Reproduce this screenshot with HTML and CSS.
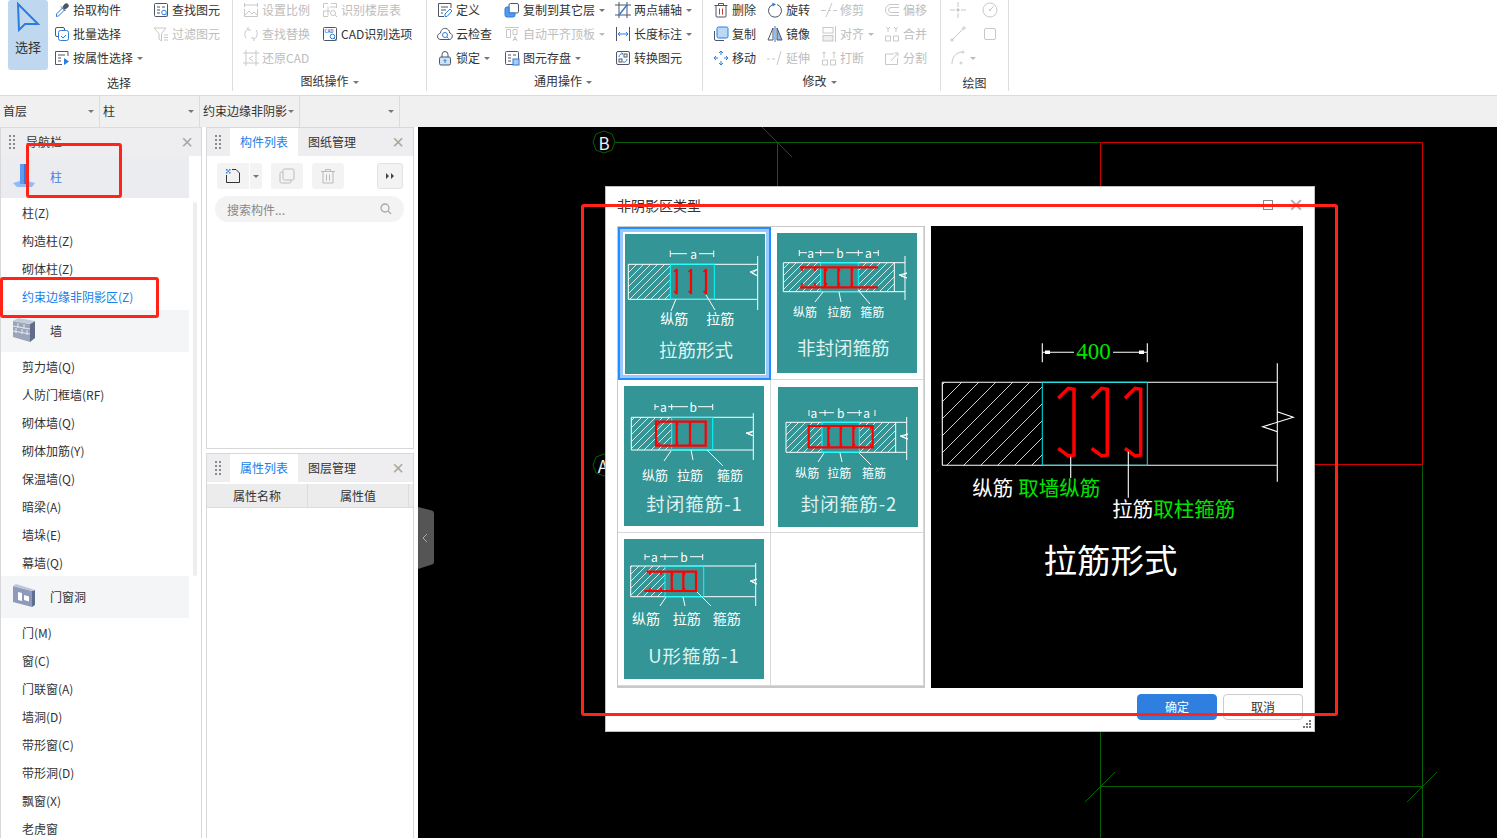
FILE: index.html
```html
<!DOCTYPE html>
<html lang="zh-CN">
<head>
    <meta charset="UTF-8">
    <title>非阴影区类型</title>
    <link rel="stylesheet" href="styles.css">
</head>
<body>

    <!-- Icon sprite -->
    <svg class="sprite" xmlns="http://www.w3.org/2000/svg">
        <defs>
            <pattern id="hatch" width="7" height="7" patternUnits="userSpaceOnUse"><path d="M-1 8L8 -1M-1 1L1 -1M6 8L8 6" stroke="#fff" stroke-width="0.8"/></pattern>
            <pattern id="hatch-big" width="17" height="17" patternUnits="userSpaceOnUse"><path d="M-1 18L18 -1M-1 1L1 -1M16 18L18 16" stroke="#fff" stroke-width="0.8"/></pattern>
        </defs>
        <symbol id="i-pick" viewBox="0 0 16 16"><path d="M2.5 14.5v-2.5l6-6 2 2-6 6z" stroke="#2b7de0"/><path d="M7 4.500l4.500 4.500M9 5l1.500-2.500c1-1 3-1 3.500 0s.5 2-.5 3L11 7z" fill="#4d5666"/></symbol>
        <symbol id="i-batch" viewBox="0 0 16 16"><rect x="1.500" y="1.500" width="9" height="9" rx="1.500"/><rect x="4.500" y="4.500" width="10" height="10" rx="2" stroke="#2b7de0" fill="#fff"/><path d="M7 10l2 2 3-3" stroke="#2b7de0"/></symbol>
        <symbol id="i-attr" viewBox="0 0 16 16"><path d="M14 6V1.500H1.500v13H8"/><path d="M4 5h7M4 8h3M4 11h3"/><path d="M10 8l5 3.500-5 3.500z" fill="#2b7de0" stroke="none"/></symbol>
        <symbol id="i-find" viewBox="0 0 16 16"><rect x="1.500" y="1.500" width="13" height="13" rx="1"/><path d="M4 5h3M9 5h3M4 8h3M4 11h3"/><circle cx="11" cy="10.500" r="2.300" stroke="#2b7de0" fill="#fff"/><path d="M12.700 12.200l2 2" stroke="#2b7de0"/></symbol>
        <symbol id="i-filter" viewBox="0 0 16 16"><path d="M1 2h12L8.500 7.500V15L6 13V7.500z"/><path d="M11 9h4M11 11.500h4M11 14h4"/></symbol>
        <symbol id="i-scale" viewBox="0 0 16 16"><path d="M1.500 3h13M1.500 1v4M14.500 1v4"/><path d="M1.500 7v7.500h13V7"/><path d="M2 13l4-4 3 3 2-2 3 3"/></symbol>
        <symbol id="i-floor" viewBox="0 0 16 16"><path d="M1.500 6V1.500H6M9 1.500h5.500V6M1.500 9v5.500H6M6 4.500v9M1.500 9H8M8 5h6"/><circle cx="11" cy="11" r="2.500"/><path d="M13 13l2 2"/></symbol>
        <symbol id="i-replace" viewBox="0 0 16 16"><path d="M3 12c-2-3-1.500-7 2-9M13 4c2 3 1.500 7-2 9"/><path d="M5 1v3h3M11 15v-3H8"/></symbol>
        <symbol id="i-restore" viewBox="0 0 16 16"><path d="M3 0v16M13 0v16M0 3h16M0 13h16"/><path d="M10 6L6 8.500l4 2.500" /></symbol>
        <symbol id="i-define" viewBox="0 0 16 16"><path d="M14 6V1.500H1.500v13H7"/><path d="M4 5h7M4 8h5M4 11h2"/><path d="M8 14.500V12l5-5 2 2-5 5.500z" stroke="#2b7de0"/></symbol>
        <symbol id="i-cloud" viewBox="0 0 16 16"><path d="M4 13.500C1 13.500 0 11.500.700 9.500S3 7.500 3.500 7C4 3 7 2 9 2.500s3.500 2 3.700 4.500c2 .5 3 2 2.500 4s-2 2.500-3.200 2.500z"/><circle cx="8" cy="9" r="2.500" stroke="#2b7de0"/><path d="M10 11l1.500 1.500" stroke="#2b7de0"/></symbol>
        <symbol id="i-lock" viewBox="0 0 16 16"><path d="M5 7V4.500a3 3 0 0 1 6 0V7"/><rect x="2.500" y="7" width="11" height="8" rx="1.500" fill="#cfe2fa"/><path d="M8 13v-3M6.500 11L8 9.500 9.500 11" stroke="#2b7de0"/></symbol>
        <symbol id="i-copyto" viewBox="0 0 16 16"><rect x="5" y="1.500" width="9.500" height="9.500" rx="1.500"/><path d="M1 7a2 2 0 0 1 2-2h2v6h6v2a2 2 0 0 1-2 2H3a2 2 0 0 1-2-2z" fill="#4e9bf0" stroke="#2b7de0"/></symbol>
        <symbol id="i-autoalign" viewBox="0 0 16 16"><path d="M1 1.500h14M2.500 3.500h4v8h-4zM9 3.500h4v5H9z"/><path d="M9 15l2-4.500 2 4.500M9.800 13.500h2.400"/></symbol>
        <symbol id="i-save" viewBox="0 0 16 16"><rect x="1.500" y="1.500" width="13" height="13" rx="1"/><path d="M4 5h3M9 5h3M4 8h3M4 11h3"/><rect x="9" y="9" width="6" height="6" fill="#a9cdf5" stroke="#2b7de0"/></symbol>
        <symbol id="i-axis" viewBox="0 0 16 16"><path d="M4 0v16M12 0v16M0 3h16M0 13h16"/><path d="M4 13L12 3" stroke="#2b7de0" stroke-width="1.500"/></symbol>
        <symbol id="i-dim" viewBox="0 0 16 16"><path d="M1.500 1v14M14.500 1v14"/><path d="M3 8h10M5 6L3 8l2 2M11 6l2 2-2 2" stroke="#2b7de0"/></symbol>
        <symbol id="i-convert" viewBox="0 0 16 16"><rect x="1.500" y="1.500" width="13" height="13" rx="1.500"/><path d="M4 7a3 3 0 0 1 4-3M8 4L6.500 2.500M12 9a3 3 0 0 1-4 3" stroke="#2b7de0"/><rect x="9" y="4" width="3" height="3"/><rect x="4" y="9" width="3" height="3"/></symbol>
        <symbol id="i-del" viewBox="0 0 16 16"><path d="M1.500 3.500h13M5.500 3.500V1.500h5v2"/><rect x="3" y="3.500" width="10" height="11.500" rx="1"/><path d="M6.500 6.500v6M9.500 6.500v6" stroke="#c83232"/></symbol>
        <symbol id="i-rotate" viewBox="0 0 16 16"><path d="M10 2.500a6.500 6.500 0 1 1-4 0"/><path d="M5.500.5l3.500 2-3.500 2z" fill="#2b7de0" stroke="none"/></symbol>
        <symbol id="i-trim" viewBox="0 0 16 16"><path d="M0 8.500h5M7 8.500h3M12 8.500h4" /><path d="M11 1L5 15"/></symbol>
        <symbol id="i-offset" viewBox="0 0 16 16"><path d="M15 2.500H7a5.500 5.500 0 0 0 0 11h8"/><path d="M15 5.500H7a2.500 2.500 0 0 0 0 5h8"/></symbol>
        <symbol id="i-copy" viewBox="0 0 16 16"><path d="M1.500 5v8a1.500 1.500 0 0 0 1.500 1.500h8"/><rect x="4" y="1" width="11" height="11" rx="1.500" fill="#bcd8f7" stroke="#2b7de0"/></symbol>
        <symbol id="i-mirror" viewBox="0 0 16 16"><path d="M6 2L1 14h5z" fill="#fff"/><path d="M10 2l5 12h-5z" fill="#8cb8ea" stroke="#4d5666"/><path d="M8 0v16" stroke="#2b7de0"/></symbol>
        <symbol id="i-align" viewBox="0 0 16 16"><rect x="2" y="1.500" width="10" height="5.500"/><rect x="2" y="9.500" width="10" height="5.500" fill="#eee"/><path d="M14.500 0v16"/></symbol>
        <symbol id="i-merge" viewBox="0 0 16 16"><path d="M1.500 10v5h5v-5zM9.500 10v5h5v-5z"/><path d="M4 2v4M12 2v4M2 1l2 2 2-2M10 1l2 2 2-2"/></symbol>
        <symbol id="i-move" viewBox="0 0 16 16"><g stroke="#2b7de0"><path d="M8 5V1M8 15v-4M5 8H1M15 8h-4"/><path d="M6 3l2-2 2 2M6 13l2 2 2-2M3 6L1 8l2 2M13 6l2 2-2 2"/></g></symbol>
        <symbol id="i-extend" viewBox="0 0 16 16"><path d="M0 9h3M5 9h3M14 1l-4 14"/></symbol>
        <symbol id="i-break" viewBox="0 0 16 16"><path d="M1.500 10v5h5v-5zM9.500 10v5h5v-5z"/><circle cx="3" cy="3" r="1"/><circle cx="13" cy="3" r="1"/><path d="M3 5v3M13 5v3"/></symbol>
        <symbol id="i-split" viewBox="0 0 16 16"><path d="M10 4H1.500v10.500h12V8"/><path d="M7 11l7-8"/><path d="M10.500 3H14v3.500"/></symbol>
        <symbol id="i-point" viewBox="0 0 16 16"><path d="M8 0v5M8 11v5M0 8h5M11 8h5"/><circle cx="8" cy="8" r="1.200" fill="#c8c8c8"/></symbol>
        <symbol id="i-circle" viewBox="0 0 16 16"><circle cx="8" cy="8" r="7"/><path d="M8 8l4-4"/><circle cx="8" cy="8" r=".8"/></symbol>
        <symbol id="i-line" viewBox="0 0 16 16"><path d="M2.500 13.500l11-11"/><circle cx="2" cy="14" r="1.200"/><circle cx="14" cy="2" r="1.200"/></symbol>
        <symbol id="i-rect" viewBox="0 0 16 16"><rect x="2.500" y="2.500" width="11" height="11" rx="1.500"/></symbol>
        <symbol id="i-arc" viewBox="0 0 16 16"><path d="M2 14C2 7 6 2.500 12 2"/><circle cx="13" cy="2" r="1"/><circle cx="11" cy="13" r="1"/></symbol>
    </svg>

    <!-- Ribbon -->
    <header class="ribbon">
        <section class="group group-select">
            <div class="group-body">
                <div class="big-btn">
                    <svg class="big-arrow" viewBox="0 0 26 32"><path d="M3 3L23 23H10L4 29z"/></svg>
                    <span>选择</span>
                </div>
                <div class="col w-99">
                    <div class="row"><svg class="ic"><use href="#i-pick"/></svg>拾取构件</div>
                    <div class="row"><svg class="ic"><use href="#i-batch"/></svg>批量选择</div>
                    <div class="row"><svg class="ic"><use href="#i-attr"/></svg>按属性选择<i class="caret"></i></div>
                </div>
                <div class="col">
                    <div class="row"><svg class="ic"><use href="#i-find"/></svg>查找图元</div>
                    <div class="row off"><svg class="ic"><use href="#i-filter"/></svg>过滤图元</div>
                </div>
            </div>
            <div class="group-label label-select">选择</div>
        </section>

        <section class="group group-drawing">
            <div class="group-body">
                <div class="col w-79">
                    <div class="row off"><svg class="ic"><use href="#i-scale"/></svg>设置比例</div>
                    <div class="row off"><svg class="ic"><use href="#i-replace"/></svg>查找替换</div>
                    <div class="row off"><svg class="ic"><use href="#i-restore"/></svg>还原CAD</div>
                </div>
                <div class="col">
                    <div class="row off"><svg class="ic"><use href="#i-floor"/></svg>识别楼层表</div>
                    <div class="row">
                        <svg class="ic" viewBox="0 0 16 16"><rect x="1.500" y="1.500" width="13" height="13" rx="1"/><text x="2.500" y="7" class="ic-cad">CAD</text><circle cx="10.500" cy="10.500" r="2.300" stroke="#2b7de0" fill="#fff"/><path d="M12.200 12.200l2 2" stroke="#2b7de0"/></svg>CAD识别选项
                    </div>
                </div>
            </div>
            <div class="group-label">图纸操作<i class="caret"></i></div>
        </section>

        <section class="group group-common">
            <div class="group-body">
                <div class="col w-67">
                    <div class="row"><svg class="ic"><use href="#i-define"/></svg>定义</div>
                    <div class="row"><svg class="ic"><use href="#i-cloud"/></svg>云检查</div>
                    <div class="row"><svg class="ic"><use href="#i-lock"/></svg>锁定<i class="caret"></i></div>
                </div>
                <div class="col w-111">
                    <div class="row"><svg class="ic"><use href="#i-copyto"/></svg>复制到其它层<i class="caret"></i></div>
                    <div class="row off"><svg class="ic"><use href="#i-autoalign"/></svg>自动平齐顶板<i class="caret"></i></div>
                    <div class="row"><svg class="ic"><use href="#i-save"/></svg>图元存盘<i class="caret"></i></div>
                </div>
                <div class="col">
                    <div class="row"><svg class="ic"><use href="#i-axis"/></svg>两点辅轴<i class="caret"></i></div>
                    <div class="row"><svg class="ic"><use href="#i-dim"/></svg>长度标注<i class="caret"></i></div>
                    <div class="row"><svg class="ic"><use href="#i-convert"/></svg>转换图元</div>
                </div>
            </div>
            <div class="group-label">通用操作<i class="caret"></i></div>
        </section>

        <section class="group group-modify">
            <div class="group-body">
                <div class="col w-54">
                    <div class="row"><svg class="ic"><use href="#i-del"/></svg>删除</div>
                    <div class="row"><svg class="ic"><use href="#i-copy"/></svg>复制</div>
                    <div class="row"><svg class="ic"><use href="#i-move"/></svg>移动</div>
                </div>
                <div class="col w-54">
                    <div class="row"><svg class="ic"><use href="#i-rotate"/></svg>旋转</div>
                    <div class="row"><svg class="ic"><use href="#i-mirror"/></svg>镜像</div>
                    <div class="row off"><svg class="ic"><use href="#i-extend"/></svg>延伸</div>
                </div>
                <div class="col w-63">
                    <div class="row off"><svg class="ic"><use href="#i-trim"/></svg>修剪</div>
                    <div class="row off"><svg class="ic"><use href="#i-align"/></svg>对齐<i class="caret"></i></div>
                    <div class="row off"><svg class="ic"><use href="#i-break"/></svg>打断</div>
                </div>
                <div class="col">
                    <div class="row off"><svg class="ic"><use href="#i-offset"/></svg>偏移</div>
                    <div class="row off"><svg class="ic"><use href="#i-merge"/></svg>合并</div>
                    <div class="row off"><svg class="ic"><use href="#i-split"/></svg>分割</div>
                </div>
            </div>
            <div class="group-label">修改<i class="caret"></i></div>
        </section>

        <section class="group group-draw">
            <div class="group-body">
                <div class="col w-32">
                    <div class="row off"><svg class="ic"><use href="#i-point"/></svg></div>
                    <div class="row off"><svg class="ic"><use href="#i-line"/></svg></div>
                    <div class="row off"><svg class="ic"><use href="#i-arc"/></svg><i class="caret"></i></div>
                </div>
                <div class="col">
                    <div class="row off"><svg class="ic"><use href="#i-circle"/></svg></div>
                    <div class="row off"><svg class="ic"><use href="#i-rect"/></svg></div>
                </div>
            </div>
            <div class="group-label label-draw">绘图</div>
        </section>
    </header>

    <!-- Floor / type selectors -->
    <div class="selectors">
        <div class="selector">首层<i class="caret"></i></div>
        <div class="selector">柱<i class="caret"></i></div>
        <div class="selector">约束边缘非阴影<i class="caret"></i></div>
        <div class="selector"><i class="caret"></i></div>
    </div>

    <main class="workspace">
        <!-- Navigation -->
        <aside class="nav">
            <div class="panel-head">
                <span class="grip"></span>
                <span class="nav-title">导航栏</span>
                <span class="close">×</span>
            </div>
            <div class="nav-scroll">
                <div class="nav-head nav-head-active">
                    <svg class="nav-icon" viewBox="0 0 24 26"><path d="M8 1h7v20H8z" fill="#5c9cf0"/><path d="M12 1h3v20h-3z" fill="#3a78d8"/><path d="M1 20l7-2v3h7v-3l8 2-3 4H5z" fill="#8dbcf7"/></svg>
                    <span>柱</span>
                </div>
                <div class="nav-item">柱(Z)</div>
                <div class="nav-item">构造柱(Z)</div>
                <div class="nav-item">砌体柱(Z)</div>
                <div class="nav-item active">约束边缘非阴影区(Z)</div>
                <div class="nav-head">
                    <svg class="nav-icon" viewBox="0 0 24 26"><path d="M1 4l17 3v18L1 20z" fill="#9aa5ba"/><path d="M18 7l5-3v17l-5 4z" fill="#5f6d88"/><path d="M1 4l5-3 17 3-5 3z" fill="#c3cad8"/><path d="M1 9l17 3M1 14l17 3M6 6v5M12 7v5M4 11v5M10 12v5M15 13v5" stroke="#e4e8ef" fill="none"/></svg>
                    <span>墙</span>
                </div>
                <div class="nav-item">剪力墙(Q)</div>
                <div class="nav-item">人防门框墙(RF)</div>
                <div class="nav-item">砌体墙(Q)</div>
                <div class="nav-item">砌体加筋(Y)</div>
                <div class="nav-item">保温墙(Q)</div>
                <div class="nav-item">暗梁(A)</div>
                <div class="nav-item">墙垛(E)</div>
                <div class="nav-item">幕墙(Q)</div>
                <div class="nav-head">
                    <svg class="nav-icon" viewBox="0 0 24 26"><path d="M1 3l19 5v16L1 19z" fill="#8d9abb"/><path d="M6 9l4 1v8l-4-1zM12 12l5 1.500v5l-5-1.500z" fill="#fff"/><path d="M20 8l3-1v15l-3 2z" fill="#5f6d90"/><path d="M1 3l3-2 19 6-3 1z" fill="#bcc5da"/></svg>
                    <span>门窗洞</span>
                </div>
                <div class="nav-item">门(M)</div>
                <div class="nav-item">窗(C)</div>
                <div class="nav-item">门联窗(A)</div>
                <div class="nav-item">墙洞(D)</div>
                <div class="nav-item">带形窗(C)</div>
                <div class="nav-item">带形洞(D)</div>
                <div class="nav-item">飘窗(X)</div>
                <div class="nav-item">老虎窗</div>
                <div class="scrollbar"></div>
            </div>
        </aside>

        <!-- Component list and properties -->
        <div class="middle">
            <section class="panel panel-list">
                <div class="panel-head">
                    <span class="grip"></span>
                    <span class="tab tab-active">构件列表</span>
                    <span class="tab">图纸管理</span>
                    <span class="close">×</span>
                </div>
                <div class="list-tools">
                    <div class="tool tool-new">
                        <svg class="tool-ic" viewBox="0 0 16 16"><path d="M7 1.500h4l3.500 3.500v9.500H1.500V7" fill="none" stroke="#333"/><path d="M1 1h1.500v1.500H1zM4 1h1.500v1.500H4zM2.500 2.500H4V4H2.500zM1 4h1.500v1.500H1zM4 4h1.500v1.500H4z" fill="#2b7de0"/></svg>
                        <span class="tool-caret"><i class="caret"></i></span>
                    </div>
                    <div class="tool">
                        <svg class="tool-ic" viewBox="0 0 16 16"><rect x="1" y="4" width="11" height="11" rx="1.500" fill="none" stroke="#bbb"/><rect x="4" y="1" width="11" height="11" rx="1.500" fill="#f3f3f3" stroke="#bbb"/></svg>
                    </div>
                    <div class="tool">
                        <svg class="tool-ic" viewBox="0 0 16 16"><path d="M1 3.500h14M5.500 3.500v-2h5v2M3 3.500V15h10V3.500M6.500 6.500v6M9.500 6.500v6" fill="none" stroke="#bbb"/></svg>
                    </div>
                    <div class="tool tool-more">
                        <svg class="more-ic" viewBox="0 0 8 6"><path d="M0 0l3 3-3 3zM5 0l3 3-3 3z" fill="#444"/></svg>
                    </div>
                </div>
                <div class="search">
                    <span>搜索构件...</span>
                    <svg class="search-ic" viewBox="0 0 12 12"><circle cx="5" cy="5" r="4" fill="none" stroke="#aaa" stroke-width="1.300"/><path d="M8 8l3 3" stroke="#aaa" stroke-width="1.300"/></svg>
                </div>
            </section>
            <section class="panel panel-props">
                <div class="panel-head">
                    <span class="grip"></span>
                    <span class="tab tab-active">属性列表</span>
                    <span class="tab">图层管理</span>
                    <span class="close">×</span>
                </div>
                <div class="props-head">
                    <span class="props-name">属性名称</span>
                    <span class="props-value">属性值</span>
                    <span class="props-end"></span>
                </div>
            </section>
        </div>

        <!-- CAD canvas -->
        <div class="canvas">
            <svg class="cad" viewBox="418 127 1079 711">
                <g class="cad-green">
                    <path d="M615 142.500H1100M777.500 142.500V186M762 127l30 30"/>
                    <path d="M1100.500 732V838M1422.500 465V838M1100 786.500H1422M1085 802l30-30M1407 802l30-30"/>
                    <polygon points="604,131 612,134 615,142 612,150 604,153 596,150 593,142 596,134"/>
                    <polygon points="604,454 612,457 615,465 612,473 604,476 596,473 593,465 596,457"/>
                </g>
                <text class="cad-letter" x="604" y="142">B</text>
                <text class="cad-letter" x="603" y="465">A</text>
                <path class="cad-red" d="M1100.500 186V142.500H1422.500V464.500H1315"/>
                <path class="split-tab" d="M418 507l14 3.500q2 .5 2 3v48q0 2.500-2 3l-14 4.500z"/>
                <path class="split-arrow" d="M427 534l-4 4 4 4"/>
            </svg>
        </div>
    </main>

    <!-- Dialog -->
    <div class="dialog">
        <div class="dialog-head">
            <span>非阴影区类型</span>
            <span class="dialog-max"></span>
            <span class="dialog-close">×</span>
        </div>
        <div class="dialog-body">
            <div class="types">
                <div class="type type-selected">
                    <svg class="thumb" viewBox="0 0 140 140">
                        <rect class="t-hatch" x="3.300" y="30.300" width="42" height="35"/>
                        <path class="t-white" d="M3.300 30.300H132.700M3.300 65.300H132.700M3.300 30.300V65.300M132.700 22V76M125 38l8-3-6 4 6 3z"/>
                        <rect class="t-cyan" x="45.300" y="30.300" width="44" height="35"/>
                        <path class="t-red" d="M51.700 35v25M66 35v25M81 35v25"/>
                        <path class="t-barb" d="M49 38l3-3M49 57l3 3M63.500 38l3-3M63.500 57l3 3M78.500 38l3-3M78.500 57l3 3"/>
                        <path class="t-white" d="M45.300 16.500v6.500M88.700 16.500v6.500M45.300 19.700H62M74 19.700H88.700M51 65l-5 12M81 61l9 15"/>
                        <text class="t-dim" x="68.700" y="19">a</text>
                        <text class="t-label t-14" x="49.300" y="84">纵筋</text>
                        <text class="t-label t-14" x="95.300" y="84">拉筋</text>
                        <text class="t-title" x="71" y="115">拉筋形式</text>
                    </svg>
                </div>
                <div class="type">
                    <svg class="thumb" viewBox="0 0 140 140">
                        <rect class="t-hatch" x="6.300" y="29.700" width="37.400" height="29"/>
                        <rect class="t-hatch" x="81.300" y="29.700" width="36" height="29"/>
                        <path class="t-white" d="M6.300 29.700H128M6.300 58.700H128M6.300 29.700V58.700M117.300 29.700V58.700M128 23V67M122 42l8-2-6 3 6 2z"/>
                        <rect class="t-cyan" x="43.700" y="29.700" width="37.600" height="29"/>
                        <path class="t-red" d="M23 34.300H101M23 54.300H101M48 34.300V54.300M61.300 34.300V54.300M74.700 34.300V54.300"/>
                        <path class="t-barb" d="M25 38v-3M38 38v-3M25 50v3M38 50v3M50 38l-2-3M63 38l-2-3M76 38l-2-3M50 50l-2 3M63 50l-2 3M76 50l-2 3"/>
                        <path class="t-white" d="M22.300 17v6M43.700 17v6M81.300 17v6M101.300 17v6M22.300 19.700H30M38 19.700H57M69 19.700H86M96 19.700H101M46 59l-8 10M62 59l2 10M81 57l12 14"/>
                        <text class="t-dim" x="33.700" y="19">a</text>
                        <text class="t-dim" x="63" y="19">b</text>
                        <text class="t-dim" x="91.300" y="19">a</text>
                        <text class="t-label t-12" x="28" y="78.700">纵筋</text>
                        <text class="t-label t-12" x="62.300" y="78.700">拉筋</text>
                        <text class="t-label t-12" x="95.300" y="78.700">箍筋</text>
                        <text class="t-title" x="66.300" y="114">非封闭箍筋</text>
                    </svg>
                </div>
                <div class="type">
                    <svg class="thumb" viewBox="0 0 140 140">
                        <rect class="t-hatch" x="7.300" y="31.300" width="40.400" height="32.700"/>
                        <path class="t-white" d="M7.300 31.300H129.300M7.300 64H129.300M7.300 31.300V64M129.300 27V74M122 47l8-2-6 3 6 2z"/>
                        <rect class="t-cyan" x="47.700" y="31.300" width="41" height="32.700"/>
                        <path class="t-red" d="M32 35.700H81.700V59.700H32zM52.700 35.700V59.700M66 35.700V59.700"/>
                        <path class="t-barb" d="M33 56l3 3M33 39l3-3M54 39l-2-3M54 56l-2 3M67 39l-2-3M67 56l-2 3"/>
                        <path class="t-white" d="M31 18v6M47.700 18v6M88.700 18v6M31 20.700H35M44 20.700H64M74 20.700H88.700M47 65l-7 10M67 64l2 10M83 64l16 16"/>
                        <text class="t-dim" x="39.300" y="20">a</text>
                        <text class="t-dim" x="69.300" y="20">b</text>
                        <text class="t-label t-13" x="31" y="88">纵筋</text>
                        <text class="t-label t-13" x="66" y="88">拉筋</text>
                        <text class="t-label t-13" x="106" y="88">箍筋</text>
                        <text class="t-title t-wide" x="70.500" y="116.700">封闭箍筋-1</text>
                    </svg>
                </div>
                <div class="type">
                    <svg class="thumb thumb-low" viewBox="0 0 140 140">
                        <rect class="t-hatch" x="8" y="35.300" width="36" height="30"/>
                        <rect class="t-hatch" x="81.300" y="35.300" width="36.400" height="30"/>
                        <path class="t-white" d="M8 35.300H128.700M8 65.300H128.700M8 35.300V65.300M117.700 35.300V65.300M128.700 30V73M122 49l8-2-6 3 6 2z"/>
                        <rect class="t-cyan" x="44" y="35.300" width="37.300" height="30"/>
                        <path class="t-red" d="M30.700 39H94.700V60.300H30.700zM50.300 39V60.300M62.700 39V60.300M75.300 39V60.300"/>
                        <path class="t-barb" d="M52 42l-2-3M64 42l-2-3M77 42l-2-3M52 57l-2 3M64 57l-2 3M77 57l-2 3M92 42l2-3M92 57l2 3"/>
                        <path class="t-white" d="M31 23v6M47 23v6M81.300 23v6M97 23v6M41 25.700H56M69 25.700H84M46 66l-6 9M62 66l2 9M81 66l12 12"/>
                        <text class="t-dim" x="36" y="25">a</text>
                        <text class="t-dim" x="62.700" y="25">b</text>
                        <text class="t-dim" x="88.700" y="25">a</text>
                        <text class="t-label t-12" x="29.300" y="85.700">纵筋</text>
                        <text class="t-label t-12" x="61.300" y="85.700">拉筋</text>
                        <text class="t-label t-12" x="96" y="85.700">箍筋</text>
                        <text class="t-title t-wide" x="71" y="115.700">封闭箍筋-2</text>
                    </svg>
                </div>
                <div class="type">
                    <svg class="thumb" viewBox="0 0 140 140">
                        <rect class="t-hatch" x="6.700" y="27" width="34.300" height="30.700"/>
                        <path class="t-white" d="M6.700 27H131.700M6.700 57.700H131.700M6.700 27V57.700M131.700 24V67M126 42l7-2-5 3 5 2z"/>
                        <rect class="t-cyan" x="41" y="27" width="38.700" height="30.700"/>
                        <path class="t-red" d="M22.700 32.700H72V52H20.300M47.700 32.700V52M59.300 32.700V52"/>
                        <path class="t-barb" d="M26 36v-3M37 36v-3M26 49v3M37 49v3M49 36l-2-3M61 36l-2-3M49 49l-2 3M61 49l-2 3"/>
                        <path class="t-white" d="M21 15v6M41 15v6M78.700 15v6M21 17.700H26M36 17.700H54M66 17.700H78.700M42 58l-6 9M59 58l2 9M73 53l14 14"/>
                        <text class="t-dim" x="30.300" y="17">a</text>
                        <text class="t-dim" x="60" y="17">b</text>
                        <text class="t-label t-14" x="22" y="79.300">纵筋</text>
                        <text class="t-label t-14" x="62.700" y="79.300">拉筋</text>
                        <text class="t-label t-14" x="102.700" y="79.300">箍筋</text>
                        <text class="t-title t-wide" x="70" y="116">U形箍筋-1</text>
                    </svg>
                </div>
                <div class="type"></div>
            </div>
            <div class="preview">
                <svg class="preview-svg" viewBox="0 0 372 462">
                    <rect x="11.300" y="156.300" width="100" height="83" fill="url(#hatch-big)"/>
                    <path class="p-white" d="M11.300 156.300H346.300M11.300 239.300H346.300M11.300 156.300V239.300M346.300 137.300V255.700M346.300 185.700L362.300 191.300 331.700 200.700 346.300 205.700"/>
                    <rect class="p-cyan" x="111.300" y="156.300" width="105" height="83"/>
                    <path class="p-red" d="M127.300 172.300L137.300 162.300 143 163.300V229L137.300 230 127.300 222.300"/>
                    <path class="p-red" d="M160.600 172.300L170.600 162.300 176.300 163.300V229L170.600 230 160.600 222.300"/>
                    <path class="p-red" d="M194 172.300L204 162.300 209.700 163.300V229L204 230 194 222.300"/>
                    <path class="p-white" d="M111.300 117.300V136.300M216.300 117.300V136.300M111.300 126.300H143M182 126.300H216.300M139.700 230.700V252M197.300 225.700V271.700"/>
                    <path d="M114 124.500h5v3.500h-5zM208 124.500h5v3.500h-5z" fill="#fff"/>
                    <text class="p-dim" x="162.500" y="125">400</text>
                    <text class="p-label" x="41.300" y="261">纵筋</text>
                    <text class="p-label p-green" x="87.300" y="261">取墙纵筋</text>
                    <text class="p-label" x="181.300" y="281.500">拉筋</text>
                    <text class="p-label p-green" x="222.300" y="281.500">取柱箍筋</text>
                    <text class="p-title" x="179.500" y="332">拉筋形式</text>
                </svg>
            </div>
        </div>
        <div class="dialog-foot">
            <span class="btn btn-primary">确定</span>
            <span class="btn">取消</span>
        </div>
        <svg class="dialog-grip" viewBox="0 0 8 8"><path d="M6 0h2v2H6zM3 3h2v2H3zM6 3h2v2H6zM0 6h2v2H0zM3 6h2v2H3zM6 6h2v2H6z" fill="#777"/></svg>
    </div>

    <!-- Red markup drawn over the screenshot -->
    <div class="mark mark-column"></div>
    <div class="mark mark-item"></div>
    <div class="mark mark-dialog"></div>

</body>
</html>
```

FILE: styles.css
```css
/* Page */
* {
    box-sizing: border-box;
}

html, body {
    height: 100%;
}

body {
    margin: 0;
    display: flex;
    flex-direction: column;
    overflow: hidden;
    position: relative;
    font-family: "Noto Sans CJK SC", "Noto Sans", sans-serif;
    font-size: 12px;
    color: #333;
    background: #fff;
}

.sprite {
    position: absolute;
    width: 0;
    height: 0;
}

.caret {
    display: inline-block;
    width: 0;
    height: 0;
    margin-left: 4px;
    border-left: 3px solid transparent;
    border-right: 3px solid transparent;
    border-top: 3px solid #777;
    vertical-align: middle;
}

/* Ribbon */
.ribbon {
    display: flex;
    height: 95px;
    flex: none;
    background: #fff;
}

.group {
    height: 91px;
    border-right: 1px solid #ddd;
}

.group-select { width: 233px; }
.group-drawing { width: 194px; }
.group-common { width: 276px; }
.group-modify { width: 238px; }
.group-draw { width: 68px; }

.group-body {
    display: flex;
    height: 68px;
    padding-left: 10px;
}

.group-select .group-body { padding-left: 8px; }
.group-draw .group-body { padding-left: 9px; }

.col {
    display: flex;
    flex-direction: column;
    gap: 4px;
}

.w-99 { width: 99px; }
.w-79 { width: 79px; }
.w-67 { width: 67px; }
.w-111 { width: 111px; }
.w-54 { width: 54px; }
.w-63 { width: 63px; }
.w-32 { width: 32px; }

.row {
    display: flex;
    align-items: center;
    gap: 3px;
    height: 20px;
    white-space: nowrap;
    line-height: 20px;
}

.row .caret {
    margin-left: 1px;
}

.off {
    color: #bdbdbd;
}

.ic {
    width: 16px;
    height: 16px;
    flex: none;
    fill: none;
    stroke: #4d5666;
    stroke-width: 1;
}

.off .ic {
    stroke: #c8c8c8;
}

.off .caret {
    border-top-color: #bbb;
}

.ic-cad {
    font-size: 4.500px;
    font-weight: 700;
    fill: #2b7de0;
    stroke: none;
}

.big-btn {
    display: flex;
    flex-direction: column;
    align-items: center;
    width: 40px;
    height: 70px;
    margin-right: 6px;
    padding-top: 1px;
    border-radius: 3px;
    background: #bfd8f0;
    font-size: 13px;
}

.big-arrow {
    width: 26px;
    height: 32px;
    margin-bottom: 4px;
    fill: none;
    stroke: #2b7de0;
    stroke-width: 2;
}

.group-label {
    margin-top: 5px;
    height: 16px;
    line-height: 16px;
    text-align: center;
}

.label-select {
    margin-top: 7px;
    padding-left: 6px;
}

.label-draw {
    margin-top: 7px;
}

.group-common .group-label {
    padding-right: 3px;
}

.group-modify .group-label {
    padding-right: 4px;
}

/* Selector bar */
.selectors {
    display: flex;
    height: 32px;
    flex: none;
    border-top: 1px solid #dcdcdc;
    background: #f0f0f0;
}

.selector {
    position: relative;
    width: 100px;
    padding-left: 3px;
    border-right: 1px solid #dcdcdc;
    line-height: 30px;
    white-space: nowrap;
}

.selector .caret {
    position: absolute;
    right: 5px;
    top: 14px;
}

/* Workspace */
.workspace {
    display: flex;
    flex: 1;
    min-height: 0;
    background: #fff;
}

.panel-head {
    display: flex;
    align-items: stretch;
    flex: none;
    position: relative;
    height: 28px;
    background: #eeeef0;
    line-height: 28px;
}

.grip {
    width: 7px;
    height: 16px;
    margin: 6px 0 0 7px;
    background-image: radial-gradient(circle, #8a8a8a 1.200px, transparent 1.400px);
    background-size: 4px 4px;
}

.close {
    position: absolute;
    right: 8px;
    top: 0;
    color: #a6a6a6;
    font-size: 20px;
    font-family: "Liberation Sans", sans-serif;
}

.panel .close {
    right: 9px;
}

/* Navigation */
.nav {
    display: flex;
    flex-direction: column;
    width: 202px;
    flex: none;
    border-left: 1px solid #d8d8d8;
    border-right: 1px solid #d8d8d8;
    border-top: 1px solid #dcdcdc;
}

.nav-title {
    margin-left: 11px;
}

.nav-scroll {
    position: relative;
    flex: 1;
    overflow: hidden;
}

.nav-head {
    display: flex;
    align-items: center;
    width: 188px;
    height: 42px;
    padding-bottom: 2px;
    background: #f4f5f7;
}

.nav-head-active {
    background: #ebecf0;
    color: #3f84de;
}

.nav-icon {
    width: 24px;
    height: 26px;
    margin: 0 14px 0 11px;
    flex: none;
}

.nav-item {
    height: 28px;
    padding: 1px 0 0 21px;
    line-height: 27px;
}

.nav-item.active {
    color: #1a7ee8;
}

.scrollbar {
    position: absolute;
    left: 192px;
    top: 46px;
    width: 4px;
    height: 374px;
    border-radius: 2px;
    background: #eee;
}

/* Middle column */
.middle {
    display: flex;
    flex-direction: column;
    gap: 4px;
    width: 208px;
    margin: 0 4px;
    flex: none;
}

.panel {
    display: flex;
    flex-direction: column;
    border: 1px solid #d8d8d8;
}

.panel-list {
    height: 322px;
}

.panel-props {
    flex: 1;
    border-bottom: 0;
}

.panel .grip {
    margin-right: 9px;
}

.tab {
    width: 68px;
    text-align: center;
}

.tab-active {
    background: #fff;
    color: #1a7ee8;
}

.list-tools {
    display: flex;
    gap: 9px;
    padding: 7px 10px 0;
}

.tool {
    display: flex;
    align-items: center;
    justify-content: center;
    width: 32px;
    height: 26px;
    border-radius: 3px;
    background: #f3f3f3;
}

.tool-new {
    width: 45px;
    justify-content: flex-start;
    padding-left: 8px;
}

.tool-caret {
    display: flex;
    align-items: center;
    height: 26px;
    margin-left: 8px;
    padding-left: 2px;
    border-left: 1px solid #fff;
}

.tool-caret .caret {
    margin-left: 1px;
}

.tool-ic {
    width: 16px;
    height: 16px;
    flex: none;
}

.tool-more {
    width: 26px;
    margin-left: 24px;
    border: 1px solid #e2e2e2;
}

.more-ic {
    width: 8px;
    height: 6px;
}

.search {
    display: flex;
    align-items: center;
    justify-content: space-between;
    height: 26px;
    margin: 7px 9px 0 8px;
    padding: 0 12px;
    border-radius: 13px;
    background: #f3f3f3;
    color: #888;
}

.search-ic {
    width: 12px;
    height: 12px;
}

.props-head {
    display: flex;
    height: 24px;
    margin-top: 2px;
    border-bottom: 1px solid #dcdcdc;
    background: #ececec;
    line-height: 23px;
    text-align: center;
}

.props-name {
    width: 101px;
    border-right: 1px solid #dcdcdc;
}

.props-value {
    width: 101px;
    border-right: 1px solid #dcdcdc;
}

/* CAD canvas */
.canvas {
    position: relative;
    flex: 1;
    background: #000;
}

.cad {
    position: absolute;
    left: 0;
    top: 0;
    width: 100%;
    height: 100%;
}

.cad-green {
    fill: none;
    stroke: #056005;
    stroke-width: 1;
}

.cad-red {
    fill: none;
    stroke: #d00000;
    stroke-width: 1;
}

.cad-letter {
    fill: #eee;
    font-size: 17px;
    text-anchor: middle;
    dominant-baseline: central;
}

.split-tab {
    fill: #555;
}

.split-arrow {
    fill: none;
    stroke: #aaa;
    stroke-width: 1;
}

/* Dialog */
.dialog {
    position: absolute;
    left: 605px;
    top: 186px;
    width: 710px;
    height: 546px;
    border: 1px solid #c0c0c0;
    background: #fff;
}

.dialog-head {
    position: relative;
    height: 39px;
    padding: 8px 0 0 11px;
    font-size: 14px;
    line-height: 20px;
}

.dialog-max {
    position: absolute;
    left: 657px;
    top: 13px;
    width: 10px;
    height: 10px;
    border: 1px solid #888;
}

.dialog-close {
    position: absolute;
    left: 683px;
    top: 5px;
    color: #aaa;
    font-size: 24px;
    line-height: 26px;
    font-family: "Liberation Sans", sans-serif;
}

.dialog-body {
    display: flex;
    gap: 6px;
    padding-left: 11px;
}

.types {
    display: grid;
    grid-template-columns: 153px 153px;
    grid-template-rows: repeat(3, 153px);
    width: 308px;
    height: 462px;
    border: 1px solid #c8c8c8;
    border-bottom-width: 2px;
}

.type {
    display: flex;
    align-items: center;
    justify-content: center;
    border-right: 1px solid #d8d8d8;
    border-bottom: 1px solid #d8d8d8;
}

.type-selected {
    border: 2px solid #1e90ff;
    outline: 3px solid #9cc8ff;
    outline-offset: -5px;
}

.thumb {
    width: 140px;
    height: 140px;
    background: #339595;
}

.thumb-low {
    margin: 2px 0 0 2px;
}

.t-white {
    fill: none;
    stroke: #fff;
    stroke-width: 1;
}

.t-cyan {
    fill: none;
    stroke: #00ffff;
    stroke-width: 1;
}

.t-red {
    fill: none;
    stroke: #ff0000;
    stroke-width: 2.200;
}

.t-barb {
    fill: none;
    stroke: #ff0000;
    stroke-width: 1.600;
}

.t-hatch {
    fill: url(#hatch);
}

.t-dim, .t-label, .t-title {
    fill: #fff;
    text-anchor: middle;
    dominant-baseline: central;
}

.t-dim {
    font-size: 12px;
}

.t-12 { font-size: 12px; }
.t-13 { font-size: 13px; }
.t-14 { font-size: 14px; }

.t-title {
    fill: #dff2f2;
    font-size: 18.500px;
}

.t-wide {
    letter-spacing: 1px;
}

.preview {
    width: 372px;
    height: 462px;
    background: #000;
}

.preview-svg {
    display: block;
    width: 372px;
    height: 462px;
}

.p-white {
    fill: none;
    stroke: #fff;
    stroke-width: 1.100;
}

.p-cyan {
    fill: none;
    stroke: #00e5e5;
    stroke-width: 1;
}

.p-red {
    fill: none;
    stroke: #ff0000;
    stroke-width: 3.500;
}

.p-dim {
    fill: #00e600;
    font-family: "Liberation Serif", serif;
    font-size: 23px;
    text-anchor: middle;
    dominant-baseline: central;
}

.p-label {
    fill: #fff;
    font-size: 20.500px;
    dominant-baseline: central;
}

.p-green {
    fill: #00e600;
}

.p-title {
    fill: #fff;
    font-size: 33.500px;
    text-anchor: middle;
    dominant-baseline: central;
}

.dialog-foot {
    display: flex;
    justify-content: flex-end;
    gap: 6px;
    padding: 6px 11px 0 0;
}

.btn {
    width: 80px;
    height: 26px;
    border: 1px solid #ccc;
    border-radius: 4px;
    line-height: 24px;
    text-align: center;
}

.btn-primary {
    border-color: #2e7fe0;
    background: #2e7fe0;
    color: #fff;
}

.dialog-grip {
    position: absolute;
    right: 3px;
    bottom: 3px;
    width: 8px;
    height: 8px;
}

/* Red markup */
.mark {
    position: absolute;
    border: 3px solid #ff2318;
    border-radius: 3px;
}

.mark-column {
    left: 26px;
    top: 143px;
    width: 96px;
    height: 55px;
}

.mark-item {
    left: 0;
    top: 277px;
    width: 159px;
    height: 41px;
}

.mark-dialog {
    left: 581px;
    top: 204px;
    width: 757px;
    height: 512px;
}
```
